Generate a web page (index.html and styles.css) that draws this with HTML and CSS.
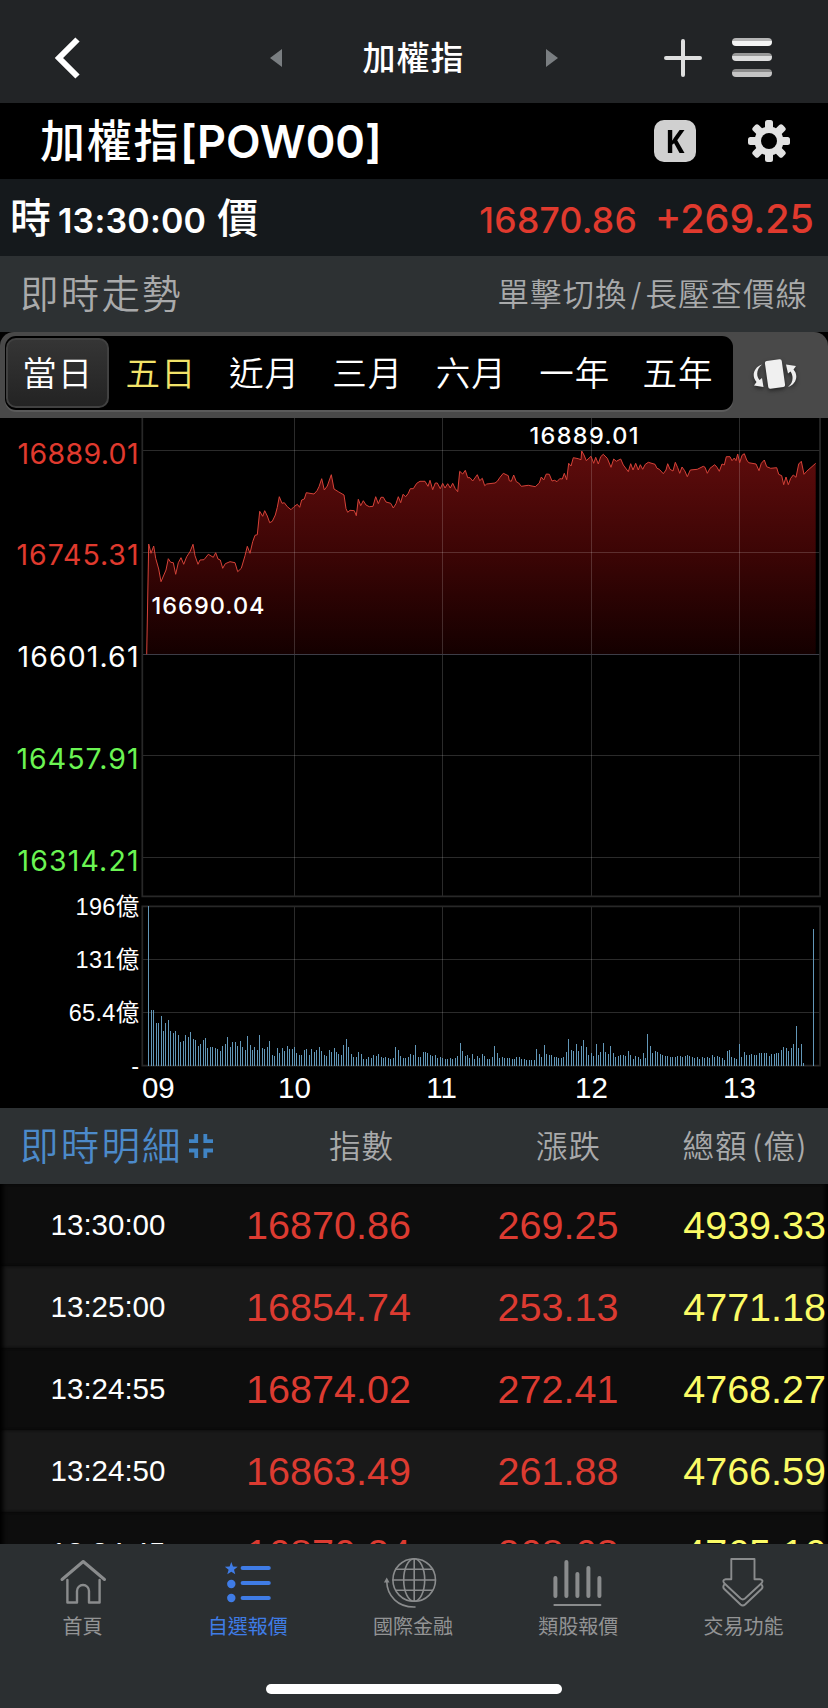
FILE: index.html
```html
<!DOCTYPE html>
<html lang="zh-Hant">
<head>
    <meta charset="UTF-8">
    <meta name="viewport" content="width=device-width, initial-scale=1.0">
    <title>加權指</title>
    <link rel="stylesheet" href="styles.css">
</head>
<body>

    <header class="nav-bar">
        <svg class="back" width="28" height="44" viewBox="0 0 28 44"><path d="M24.500 3.500 6 22l18.500 18.500" fill="none" stroke="#fff" stroke-width="6"/></svg>
        <div class="switcher">
            <svg width="12" height="18" viewBox="0 0 12 18"><path d="M12 0v18L0 9z" fill="#7a7e81"/></svg>
            <span class="nav-title">加權指</span>
            <svg width="12" height="18" viewBox="0 0 12 18"><path d="M0 0v18l12-9z" fill="#7a7e81"/></svg>
        </div>
        <div class="nav-tools">
            <svg width="38" height="38" viewBox="0 0 38 38"><path d="M19 2v34M2 19h34" stroke="#dfdfdf" stroke-width="4" stroke-linecap="round"/></svg>
            <div class="menu"><i></i><i></i><i></i></div>
        </div>
    </header>

    <div class="stock-bar">
        <h1>加權指<span>[POW00]</span></h1>
        <div class="k-btn"><span>K</span></div>
        <svg class="gear" width="42" height="42" viewBox="-21 -21 42 42">
            <g fill="#e2e2e2">
                <rect x="-4" y="-21" width="8" height="42" rx="2.500"/>
                <rect x="-4" y="-21" width="8" height="42" rx="2.500" transform="rotate(45)"/>
                <rect x="-4" y="-21" width="8" height="42" rx="2.500" transform="rotate(90)"/>
                <rect x="-4" y="-21" width="8" height="42" rx="2.500" transform="rotate(135)"/>
                <circle r="14.500"/>
            </g>
            <circle r="8" fill="#000"/>
        </svg>
    </div>

    <div class="quote-bar">
        <span class="quote-label">時</span>
        <span class="quote-time">13:30:00</span>
        <span class="quote-label">價</span>
        <span class="quote-price">16870.86</span>
        <span class="quote-change">+269.25</span>
    </div>

    <div class="section-bar">
        <span class="section-title">即時走勢</span>
        <span class="section-hint">單擊切換<b>/</b>長壓查價線</span>
    </div>

    <div class="range-bar">
        <div class="range-tabs">
            <div class="range-tab active">當日</div>
            <div class="range-tab picked">五日</div>
            <div class="range-tab">近月</div>
            <div class="range-tab">三月</div>
            <div class="range-tab">六月</div>
            <div class="range-tab">一年</div>
            <div class="range-tab">五年</div>
        </div>
        <svg class="rotate" width="48" height="36" viewBox="0 0 48 36">
            <rect x="15.500" y="4" width="17" height="28" rx="2" fill="#f0f0f0" transform="rotate(-8 24 18)"/>
            <path d="M11 8.500C3 11 0 20 5.500 26l-2.500 3.500 9.500 1.500-1.500-9-2.500 2C4.500 19 6 12.500 11 8.500z" fill="#eee"/>
            <path d="M37 31c8-2.500 11-11.500 5.500-17.500l2.500-3.500-10-1.500 2 9 2.500-2c3.500 5 2.500 11.500-2.500 15.500z" fill="#eee"/>
        </svg>
    </div>

    <svg class="chart" id="chart" width="828" height="690" viewBox="0 0 828 690">
        <defs>
            <linearGradient id="fade" gradientUnits="userSpaceOnUse" x1="0" y1="33" x2="0" y2="237">
                <stop offset="0" stop-color="#5e0c0c"/>
                <stop offset="0.500" stop-color="#3c0505"/>
                <stop offset="1" stop-color="#140000"/>
            </linearGradient>
        </defs>
        <path class="area" id="area"/>
        <g class="grid">
            <path d="M143 32.500H820M143 134.500H820M143 337.500H820M143 439.500H820"/>
            <path d="M294.500 0V478M442.500 0V478M591.500 0V478M739.500 0V478"/>
            <path d="M143 541.500H820M143 594.500H820"/>
            <path d="M294.500 488V648M442.500 488V648M591.500 488V648M739.500 488V648"/>
        </g>
        <path class="base" d="M143 236.500H820"/>
        <path class="frame" d="M142.300 0V478.300H820V0M142.300 488.300H820V647.700H142.300z"/>
        <path class="price-line" id="priceLine"/>
        <path class="volume" id="volume"/>

        <g class="price-label">
            <text class="up" x="17.500" y="45.700" textLength="121">16889.01</text>
            <text class="up" x="16.500" y="147.300" textLength="122">16745.31</text>
            <text x="17.500" y="249.300" textLength="121">16601.61</text>
            <text class="down" x="16.500" y="351" textLength="122">16457.91</text>
            <text class="down" x="17.500" y="452.500" textLength="121">16314.21</text>
        </g>
        <g class="mark">
            <text x="529.500" y="26.300" textLength="109">16889.01</text>
            <text x="151.500" y="195.700" textLength="113">16690.04</text>
        </g>
        <g class="volume-label">
            <text x="139.500" y="496.700">196億</text>
            <text x="139.500" y="549.700">131億</text>
            <text x="139.500" y="602.700">65.4億</text>
            <text x="139.500" y="656">-</text>
        </g>
        <g class="hour-label">
            <text x="158.300" y="680.300">09</text>
            <text x="294.500" y="680.300">10</text>
            <text x="441.500" y="680.300">11</text>
            <text x="591.500" y="680.300">12</text>
            <text x="739.500" y="680.300">13</text>
        </g>
    </svg>

    <div class="detail-bar">
        <span class="section-title">即時明細</span>
        <svg width="24" height="24" viewBox="0 0 24 24"><path d="M7.200 0v7.200H0M16.300 0v7.200H24M0 16.500h7.200V24M24 16.500h-7.700V24" fill="none" stroke="#4084c4" stroke-width="3.800"/></svg>
        <span class="col-index">指數</span>
        <span class="col-change">漲跌</span>
        <span class="col-total">總額<b>(</b>億<b>)</b></span>
    </div>

    <div class="detail-list">
        <div class="row"><span class="time">13:30:00</span><span>16870.86</span><span>269.25</span><span class="total">4939.33</span></div>
        <div class="row"><span class="time">13:25:00</span><span>16854.74</span><span>253.13</span><span class="total">4771.18</span></div>
        <div class="row"><span class="time">13:24:55</span><span>16874.02</span><span>272.41</span><span class="total">4768.27</span></div>
        <div class="row"><span class="time">13:24:50</span><span>16863.49</span><span>261.88</span><span class="total">4766.59</span></div>
        <div class="row"><span class="time">13:24:45</span><span>16870.24</span><span>268.63</span><span class="total">4765.16</span></div>
    </div>

    <footer class="tab-bar">
        <div class="tabs">
            <div class="tab">
                <svg width="60" height="60" viewBox="0 0 60 60">
                    <path d="M9 27.500 30.200 9.500l21.300 18" stroke-width="3"/>
                    <path d="M14.400 28v22.500H24V39a6 6 0 0 1 12 0v11.500h10.600V28" stroke-width="2.400"/>
                </svg>
                首頁
            </div>
            <div class="tab selected">
                <svg width="60" height="60" viewBox="0 0 60 60">
                    <path class="solid" d="M13.300 10l1.700 4.500 4.700.200-3.700 3 1.300 4.600-4-2.600-4 2.600 1.300-4.600-3.700-3 4.700-.200z"/>
                    <circle class="solid" cx="13.300" cy="32" r="4.200"/>
                    <circle class="solid" cx="13.300" cy="46" r="4.200"/>
                    <path d="M24.700 16h26M24.700 31h26M24.700 46h26" stroke-width="4.200"/>
                </svg>
                自選報價
            </div>
            <div class="tab">
                <svg width="60" height="60" viewBox="0 0 60 60" stroke-width="1.600">
                    <circle cx="31.200" cy="28" r="21.300"/>
                    <ellipse cx="31.200" cy="28" rx="10.500" ry="21.300"/>
                    <path d="M31.200 6.700v42.600M10 28h42.400M12.800 17.300h36.800M12.800 38.300h36.800"/>
                    <path d="M3.700 29C4 44 15 55.500 32 55"/>
                    <path class="solid" d="M3.700 25.500.900 30.500h5.600z"/>
                </svg>
                國際金融
            </div>
            <div class="tab">
                <svg width="60" height="60" viewBox="0 0 60 60">
                    <path d="M7.400 26v18M18.400 10v34M29.400 22v22M40.400 16v28M51.400 26v18" stroke-width="4"/>
                    <path d="M6.400 53h46" stroke-width="2"/>
                </svg>
                類股報價
            </div>
            <div class="tab">
                <svg width="60" height="60" viewBox="0 0 60 60" stroke-width="1.900">
                    <path d="M18.300 7h23.200v20.300h5.500q4 .600 1.500 4L32 46.500q-2.200 1.800-4.400 0L11.300 31.300q-2.500-3.400 1.500-4h5.500z"/>
                    <path d="M11.300 32.500q-2 2.500 0 4.500l16.200 15.500q2.300 2 4.600 0L48.500 37q2-2 0-4.500"/>
                </svg>
                交易功能
            </div>
        </div>
        <div class="home-indicator"></div>
    </footer>

    <script src="chart.js"></script>
</body>
</html>
```
FILE: styles.css
```css
* {
    box-sizing: border-box;
}
body {
    margin: 0;
    width: 828px;
    height: 1708px;
    overflow: hidden;
    display: flex;
    flex-direction: column;
    background-color: #000;
    color: #fff;
    font-family: Inter, "Noto Sans CJK TC", sans-serif;
}
svg {
    display: block;
    flex-shrink: 0;
}
b {
    font-weight: inherit;
}

/* top navigation */
.nav-bar {
    height: 103px;
    flex-shrink: 0;
    padding: 13px 56px 0 53px;
    display: flex;
    align-items: center;
    justify-content: space-between;
    background-color: #222426;
}
.switcher {
    display: flex;
    align-items: center;
    justify-content: space-between;
    width: 288px;
    margin-left: 82px;
}
.nav-title {
    font-size: 33px;
    font-weight: 500;
    letter-spacing: 1px;
    line-height: 40px;
}
.nav-tools {
    display: flex;
    align-items: center;
    gap: 30px;
}
.menu {
    width: 40px;
    height: 39px;
    margin-top: -2px;
    display: flex;
    flex-direction: column;
    justify-content: space-between;
}
.menu i {
    height: 8px;
    border-radius: 4px;
    background: linear-gradient(#b5b5b5 35%, #f4f4f4 36%);
}
.menu i:nth-child(2) {
    background: linear-gradient(#989898 35%, #dcdcdc 36%);
}
.menu i:nth-child(3) {
    background: linear-gradient(#8b8b8b 35%, #c4c4c4 36%);
}

/* stock name */
.stock-bar {
    height: 76px;
    flex-shrink: 0;
    padding: 0 38px 0 40px;
    display: flex;
    align-items: center;
}
.stock-bar h1 {
    margin: 2px auto 0 0;
    font-size: 45px;
    font-weight: 500;
    letter-spacing: 1.700px;
    line-height: 60px;
}
.stock-bar h1 span {
    font-weight: 600;
    letter-spacing: 0;
}
.k-btn {
    width: 42px;
    height: 42px;
    margin-right: 52px;
    border-radius: 10px;
    background-color: #d0d0d0;
    color: #000;
    font: bold 33px/41px "Noto Sans", sans-serif;
    text-align: center;
}
.k-btn span {
    display: block;
    transform: scaleX(0.880);
}

/* time and price */
.quote-bar {
    height: 77px;
    flex-shrink: 0;
    padding: 0 14px 0 10px;
    display: flex;
    align-items: baseline;
    line-height: 78px;
    background-color: #15191c;
    font-weight: 600;
}
.quote-label {
    font-size: 41px;
    font-weight: 500;
}
.quote-time {
    margin: 0 11px 0 7px;
    font-size: 34px;
    letter-spacing: 0.200px;
}
.quote-price {
    margin-left: auto;
    color: #e03a2e;
    font-size: 35.500px;
    font-weight: 500;
    letter-spacing: 0.250px;
}
.quote-change {
    margin-left: 18px;
    color: #e03a2e;
    font-size: 39.500px;
    font-weight: 500;
}

/* section headers */
.section-bar,
.detail-bar {
    height: 76px;
    flex-shrink: 0;
    padding: 0 20px 0 20px;
    display: flex;
    align-items: center;
    background-color: #2d3133;
    color: #a9aaab;
    font-weight: 350;
}
.section-title {
    font-size: 38.500px;
    letter-spacing: 2.200px;
    line-height: 76px;
}
.section-hint {
    margin: -4px 0 0 auto;
    font-size: 31.500px;
    letter-spacing: 1px;
}
.section-hint b {
    padding: 0 3px;
}

/* range tabs */
.range-bar {
    height: 86px;
    flex-shrink: 0;
    padding: 4px 29px 8px 5px;
    display: flex;
    align-items: center;
    justify-content: space-between;
    border-radius: 14px 14px 0 0;
    background-color: #494949;
}
.range-tabs {
    width: 728px;
    height: 74px;
    padding: 2px 1px;
    display: flex;
    border-radius: 11px;
    background-color: #000;
    box-shadow: 0 2px 0 #5b5b5b;
}
.range-tab {
    width: 103.400px;
    font-size: 34.500px;
    font-weight: 350;
    letter-spacing: 1px;
    line-height: 71px;
    text-align: center;
}
.range-tab.active {
    border: 2px solid #414141;
    border-radius: 10px;
    line-height: 67px;
    background: linear-gradient(#353535, #232323);
}
.range-tab.picked {
    color: #f2e369;
}
.rotate {
    margin-top: 2px;
    filter: drop-shadow(0 2px 2px #222);
}

/* chart */
.area {
    fill: url(#fade);
}
.grid path {
    fill: none;
    stroke: #fff;
    stroke-opacity: 0.170;
}
.base {
    stroke: #3d3d47;
}
.frame {
    fill: none;
    stroke: #282828;
    stroke-width: 1.700;
}
.price-line {
    fill: none;
    stroke: #d54238;
    stroke-width: 1;
}
.volume {
    stroke: #6297b8;
    stroke-width: 1;
}
.price-label {
    fill: #fff;
    font-size: 28.500px;
}
.price-label .up {
    fill: #e03a2e;
}
.price-label .down {
    fill: #6bf553;
}
.mark {
    fill: #fff;
    font-size: 23.500px;
    font-weight: 550;
}
.volume-label {
    fill: #fff;
    font-family: "Liberation Sans", "Noto Sans CJK TC", sans-serif;
    font-size: 23.500px;
    letter-spacing: 0.300px;
    text-anchor: end;
}
.hour-label {
    fill: #fff;
    font-family: "Liberation Sans", sans-serif;
    font-size: 29.500px;
    text-anchor: middle;
}

/* detail table */
.detail-bar {
    font-size: 31.500px;
    letter-spacing: 1px;
}
.detail-bar .section-title {
    width: 169px;
    color: #4c8aca;
}
.col-index,
.col-change,
.col-total {
    margin-top: -4px;
}
.col-index {
    margin-left: 116px;
}
.col-change {
    margin-left: 142px;
}
.col-total {
    margin-left: auto;
}
.col-total b:first-child {
    margin-left: 4px;
}
.detail-list {
    height: 360px;
    flex-shrink: 0;
    overflow: hidden;
    font-family: "Liberation Sans", sans-serif;
}
.row {
    height: 82px;
    display: grid;
    grid-template-columns: 216px 225px 234px 151px;
    justify-items: center;
    line-height: 82px;
    background-color: #0d0d0d;
    color: #dc3b31;
    font-size: 39.500px;
    box-shadow: inset 5px 0 4px -2px #000, inset -5px 0 4px -2px #000;
}
.row:nth-child(even) {
    background-color: #191919;
}
.row .time {
    color: #fff;
    font-size: 29.500px;
}
.row .total {
    color: #fbfb66;
    justify-self: end;
}

/* bottom tabs */
.tab-bar {
    height: 164px;
    flex-shrink: 0;
    padding-top: 8px;
    background-color: #2b2f31;
}
.tabs {
    display: flex;
    margin-right: 2px;
}
.tab {
    flex: 1;
    display: flex;
    flex-direction: column;
    align-items: center;
    color: #939495;
    font-size: 20px;
    line-height: 31px;
}
.tab svg {
    fill: none;
    stroke: #8a8c8d;
    stroke-linecap: round;
    stroke-linejoin: round;
}
.tab .solid {
    fill: #8a8c8d;
    stroke: none;
}
.tab.selected {
    color: #3f7ce6;
}
.tab.selected svg {
    stroke: #3f7ce6;
}
.tab.selected .solid {
    fill: #3f7ce6;
}
.home-indicator {
    width: 296px;
    height: 10px;
    margin: 41px auto 0;
    border-radius: 5px;
    background-color: #fff;
}
```
FILE: chart.js
```javascript
// x, y pairs in device pixels (3 per css pixel)
var morning = [440,733,446,402,453,430,461,408,467,445,476,477,483,515,498,480,505,446,512,457,520,458,527,493,535,458,543,443,551,463,560,440,570,425,579,403,585,437,594,463,600,450,612,449,625,433,640,442,647,428,654,447,661,450,668,475,676,461,690,455,705,458,713,485,724,475,735,437,742,409,750,430,758,395,765,376,772,374,779,304,788,319,794,302,802,318,809,338,817,334,826,315,832,292,838,260,846,280,853,278,862,290,873,299,882,290,892,283,899,292,905,270,913,267,919,248,942,252,951,242,957,230,965,206,973,240,982,228,994,194,1002,237,1015,245,1032,255,1038,296,1043,307,1050,301,1063,302,1069,317,1075,268,1082,287,1090,272,1098,285,1108,290,1119,289,1127,260,1135,281,1143,262,1150,262,1158,276,1172,280,1180,294,1188,281,1195,260,1202,278,1209,253,1217,260,1225,250];
// the rest of the session, x counted from 1230
var rest = [1,236,10,236,20,220,30,214,45,214,54,229,60,211,68,239,76,219,82,219,91,236,98,220,105,234,113,221,121,234,128,220,136,236,143,245,149,184,158,192,166,181,173,203,180,203,188,213,202,194,209,212,217,205,224,227,230,222,255,219,262,214,270,202,280,190,295,197,298,212,304,214,311,195,319,215,326,219,334,229,355,226,376,230,388,219,394,201,401,210,409,192,418,193,426,213,434,211,441,215,449,206,457,207,463,190,470,209,476,160,483,168,490,143,505,146,513,149,515,123,522,135,529,152,543,139,551,160,557,142,565,162,572,140,580,133,592,145,603,172,611,147,619,154,632,147,640,165,655,185,662,161,669,180,677,160,685,180,691,164,698,178,706,163,715,157,735,163,741,175,748,178,760,191,768,180,773,161,780,178,789,183,796,157,803,173,809,190,816,171,824,182,832,200,841,180,862,178,880,169,885,172,892,190,900,175,914,164,921,172,928,184,936,162,943,165,949,140,960,140,966,152,973,144,978,152,983,132,989,158,996,136,1003,131,1010,150,1016,158,1038,162,1047,182,1054,160,1063,150,1070,170,1082,175,1100,173,1106,193,1115,197,1121,224,1128,201,1135,224,1142,205,1150,195,1158,202,1166,162,1174,154,1182,193,1190,184,1217,160];

// top of each one-minute volume bar, 557 is zero
var volumeTops = [79,390,390,429,429,408,453,429,420,453,459,453,465,486,483,465,471,456,477,480,498,492,480,474,504,501,501,504,507,513,498,492,471,501,486,486,498,483,501,510,468,495,510,501,510,465,504,507,501,483,525,528,504,519,504,513,498,507,507,501,519,525,525,510,507,525,507,516,510,501,513,525,528,510,516,504,516,522,525,495,477,501,522,531,531,516,522,537,537,531,534,525,528,522,531,534,531,534,537,534,501,510,528,534,534,531,522,525,495,531,
    531,516,516,519,525,528,525,534,531,534,537,537,534,537,534,528,489,513,528,525,534,522,537,528,534,522,528,537,537,531,498,519,534,531,534,534,534,537,537,531,531,537,537,540,540,540,540,507,522,531,495,522,525,525,531,531,534,534,531,516,477,510,513,492,513,498,480,501,525,519,528,492,525,516,489,516,522,498,519,531,528,525,525,528,513,525,537,528,531,537,519,534,462,498,519,513,516,522,525,528,528,531,531,531,528,528,531,528,525,528,531,534,531,537,531,534,531,534,525,531,528,531,534,540,513,510,531,534,537,492,531,516,525,525,522,525,525,519,519,519,519,528,522,522,519,519,510,501,504,513,504,492,438,504,492,549];

var points = [];
function addPoints(list, offset) {
    for (var i = 0; i < list.length; i += 2) {
        points.push(((list[i] + offset) / 3).toFixed(1) + ' ' + (list[i + 1] / 3 - 8).toFixed(1));
    }
}
addPoints(morning, 0);
addPoints(rest, 1230);

var line = 'M' + points.join('L');
document.getElementById('priceLine').setAttribute('d', line);
document.getElementById('area').setAttribute('d', line + 'V236.5H146.7z');

function bar(x, top) {
    return 'M' + (Math.floor(x / 3) + 0.5) + ' 648V' + Math.round(top / 3 + 462);
}
var step = (2411 - 446) / (volumeTops.length - 1);
var bars = volumeTops.map(function(top, i) {
    return bar(446 + i * step, top);
}).join('');
// closing auction
bars += bar(2441, 147);
document.getElementById('volume').setAttribute('d', bars);
```
